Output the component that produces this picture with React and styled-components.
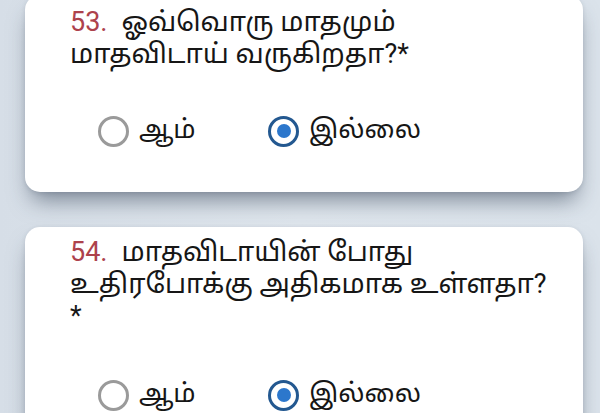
import React from "react";
import styled, { createGlobalStyle } from "styled-components";

const Global = createGlobalStyle`
  html, body { margin: 0; padding: 0; }
  body {
    width: 600px;
    height: 413px;
    overflow: hidden;
    background: linear-gradient(90deg, #d6dee7 0%, #dfe6ed 50%, #dbe3eb 100%);
    font-family: "Roboto", "Noto Sans Tamil", "Noto Sans", sans-serif;
  }
`;

const Page = styled.div`
  display: flex;
  flex-direction: column;
  gap: 35px;
  padding: 0 17px 0 25px;
  margin-top: -5px;
`;

const Card = styled.section`
  background: #ffffff;
  border-radius: 15px;
  box-shadow: 0 14px 22px -6px rgba(45, 60, 80, 0.55), 0 1px 4px rgba(60, 75, 95, 0.15);
  padding: ${(p) => p.$pad};
  display: flex;
  flex-direction: column;
`;

const Question = styled.div`
  font-size: 27px;
  line-height: 32px;
  color: #161616;
  padding-left: 45px;
`;

const Num = styled.span`
  color: #ad424c;
  font-size: 27px;
  margin-right: 14px;
`;

const Options = styled.div`
  display: flex;
  align-items: center;
  padding-left: 73px;
  margin-top: ${(p) => p.$mt}px;
`;

const Option = styled.label`
  display: flex;
  align-items: center;
  gap: 10px;
  width: 170px;
  font-size: 26px;
  color: #161616;
`;

const Radio = styled.span`
  box-sizing: border-box;
  flex: none;
  width: 31px;
  height: 31px;
  border-radius: 50%;
  border: 3px solid ${(p) => (p.$on ? "#235890" : "#9a9a9a")};
  display: flex;
  align-items: center;
  justify-content: center;
  &::after {
    content: "";
    width: 14px;
    height: 14px;
    border-radius: 50%;
    background: ${(p) => (p.$on ? "#2c77cc" : "transparent")};
  }
`;

function Choice({ label, on }) {
  return (
    <Option>
      <Radio $on={on} />
      <span>{label}</span>
    </Option>
  );
}

export default function App() {
  return (
    <>
      <Global />
      <Page>
        <Card $pad="11px 0 44px">
          <Question>
            <Num>53.</Num>ஓவ்வொரு மாதமும்
            <br />
            மாதவிடாய் வருகிறதா?*
          </Question>
          <Options $mt={44}>
            <Choice label="ஆம்" />
            <Choice label="இல்லை" on />
          </Options>
        </Card>
        <Card $pad="9px 0 40px">
          <Question>
            <Num>54.</Num>மாதவிடாயின் போது
            <br />
            உதிரபோக்கு அதிகமாக உள்ளதா?
            <br />*
          </Question>
          <Options $mt={46}>
            <Choice label="ஆம்" />
            <Choice label="இல்லை" on />
          </Options>
        </Card>
      </Page>
    </>
  );
}
